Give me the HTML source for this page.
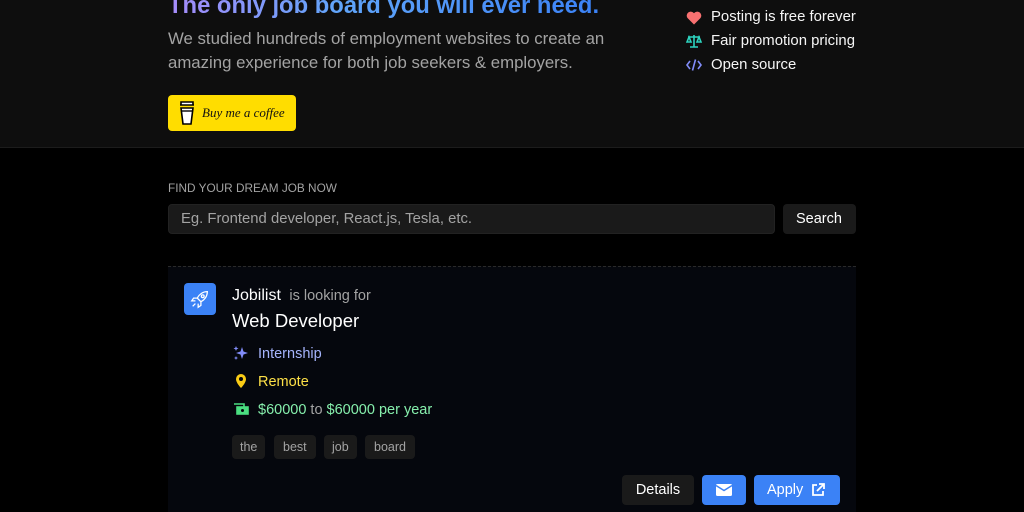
<!DOCTYPE html>
<html style="overflow:hidden;width:1024px;height:512px"><head><meta charset="utf-8"><style>
*{margin:0;padding:0;box-sizing:border-box}
body{width:1024px;height:512px;overflow:hidden;background:#000;font-family:"Liberation Sans",sans-serif;position:relative}
.a{position:absolute;white-space:nowrap}
</style></head><body>
<div class="a" style="left:0;top:0;width:1024px;height:148px;background:#0e0e0e;border-bottom:1px solid #1c1c1c"></div>
<div class="a" style="left:168px;top:-8px;font-size:23.8px;font-weight:bold;background:linear-gradient(90deg,#a78bfa,#60a5fa 40%,#3b82f6);-webkit-background-clip:text;color:transparent">The only job board you will ever need.</div>
<div class="a" style="left:168px;top:27px;font-size:16.8px;line-height:24px;color:#a3a3a3">We studied hundreds of employment websites to create an<br>amazing experience for both job seekers &amp; employers.</div>
<div class="a" style="left:168px;top:95px;width:128px;height:36px;background:#ffdd00;border-radius:4px"></div>
<svg class="a" style="left:178px;top:100px" width="18" height="26" viewBox="0 0 18 26"><path d="M2 5h14M3 2h12v3H3zM3 8h12l-2 16H5z" fill="#fff" stroke="#000" stroke-width="1.6"/><path d="M4 11h10" stroke="#000" stroke-width="1.4"/></svg>
<div class="a" style="left:202px;top:105px;font-size:13px;font-style:italic;font-family:'Liberation Serif',serif;color:#111">Buy me a coffee</div>
<svg class="a" style="left:686px;top:11px" width="16" height="14" viewBox="0 0 16 14"><path d="M8 13.5 1.5 7A3.6 3.6 0 0 1 8 2.3 3.6 3.6 0 0 1 14.5 7z" fill="#f87171"/></svg>
<div class="a" style="left:711px;top:9px;font-size:14.9px;color:#f5f5f5">Posting is free forever</div>
<svg class="a" style="left:686px;top:34px" width="16" height="14" viewBox="0 0 16 14" fill="none" stroke="#2dd4bf" stroke-width="1.6"><path d="M8 1v12M4 13h8M2 3h12M3 3 1 8h4zM13 3l-2 5h4z"/></svg>
<div class="a" style="left:711px;top:33px;font-size:14.9px;color:#f5f5f5">Fair promotion pricing</div>
<svg class="a" style="left:686px;top:58px" width="16" height="14" viewBox="0 0 16 14" fill="none" stroke="#818cf8" stroke-width="1.6"><path d="M4 3 1 7l3 4M12 3l3 4-3 4M9.5 1.5l-3 11"/></svg>
<div class="a" style="left:711px;top:57px;font-size:14.9px;color:#f5f5f5">Open source</div>
<div class="a" style="left:168px;top:181px;font-size:11.8px;color:#a3a3a3">FIND YOUR DREAM JOB NOW</div>
<div class="a" style="left:168px;top:204px;width:607px;height:30px;background:#1a1a1a;border:1px solid #222;border-radius:4px"></div>
<div class="a" style="left:181px;top:211px;font-size:14.85px;color:#a3a3a3">Eg. Frontend developer, React.js, Tesla, etc.</div>
<div class="a" style="left:783px;top:204px;width:73px;height:30px;background:#1a1a1a;border-radius:4px"></div>
<div class="a" style="left:796px;top:211px;font-size:14.5px;color:#fff">Search</div>
<div class="a" style="left:168px;top:266px;width:688px;height:246px;background:#05070d;border-top:1px dashed #2a2a2a"></div>
<div class="a" style="left:184px;top:283px;width:32px;height:32px;background:#3b82f6;border-radius:4px"></div>
<svg class="a" style="left:189px;top:288px" width="22" height="22" viewBox="0 0 24 24" fill="none" stroke="#fff" stroke-width="1.4"><path d="M20 4c-5 0-9 3-11 7l4 4c4-2 7-6 7-11zM9 11H5l-2 3 4 0M13 15v4l-3 2 0-4M7 17l-3 3"/><circle cx="15" cy="9" r="1.5"/></svg>
<div class="a" style="left:232px;top:287px;font-size:16px;color:#fff">Jobilist <span style="font-size:14.5px;color:#a3a3a3">&nbsp;is looking for</span></div>
<div class="a" style="left:232px;top:310px;font-size:18.5px;color:#fff">Web Developer</div>
<svg class="a" style="left:233px;top:345px" width="16" height="16" viewBox="0 0 16 16" fill="#818cf8"><path d="M9 2l1.5 4.5L15 8l-4.5 1.5L9 14l-1.5-4.5L3 8l4.5-1.5zM3 1l.7 1.8L5.5 3.5 3.7 4.2 3 6 2.3 4.2.5 3.5 2.3 2.8zM3 11l.6 1.4L5 13l-1.4.6L3 15l-.6-1.4L1 13l1.4-.6z"/></svg>
<div class="a" style="left:258px;top:346px;font-size:14.5px;color:#a5b4fc">Internship</div>
<svg class="a" style="left:233px;top:373px" width="16" height="16" viewBox="0 0 16 16"><path d="M8 1a5 5 0 0 0-5 5c0 4 5 9 5 9s5-5 5-9a5 5 0 0 0-5-5z" fill="#facc15"/><circle cx="8" cy="6" r="2" fill="#05070d"/></svg>
<div class="a" style="left:258px;top:374px;font-size:14.5px;color:#fde047">Remote</div>
<svg class="a" style="left:233px;top:402px" width="16" height="14" viewBox="0 0 16 14" fill="none" stroke="#4ade80" stroke-width="1.6"><path d="M1 2h10v6"/><rect x="4" y="5" width="11" height="7" fill="#4ade80"/><circle cx="9.5" cy="8.5" r="1.5" fill="#05070d" stroke="none"/></svg>
<div class="a" style="left:258px;top:402px;font-size:14.5px;color:#86efac">$60000 <span style="color:#a3a3a3">to</span> $60000 per year</div>
<div class="a" style="left:232px;top:435px;height:24px;padding:0 8px;background:#1a1a1a;border-radius:4px;font-size:12.5px;line-height:24px;color:#a3a3a3">the</div>
<div class="a" style="left:274px;top:435px;height:24px;padding:0 9px;background:#1a1a1a;border-radius:4px;font-size:12.5px;line-height:24px;color:#a3a3a3">best</div>
<div class="a" style="left:324px;top:435px;height:24px;padding:0 8px;background:#1a1a1a;border-radius:4px;font-size:12.5px;line-height:24px;color:#a3a3a3">job</div>
<div class="a" style="left:365px;top:435px;height:24px;padding:0 9px;background:#1a1a1a;border-radius:4px;font-size:12.5px;line-height:24px;color:#a3a3a3">board</div>
<div class="a" style="left:622px;top:475px;width:72px;height:30px;background:#1a1a1a;border-radius:4px;font-size:14.5px;line-height:31px;text-align:center;color:#fff">Details</div>
<div class="a" style="left:702px;top:475px;width:44px;height:30px;background:#3b82f6;border-radius:4px"></div>
<svg class="a" style="left:716px;top:484px" width="16" height="12" viewBox="0 0 16 12"><rect width="16" height="12" rx="1.5" fill="#fff"/><path d="M0 1.5 8 6.5 16 1.5" stroke="#3b82f6" stroke-width="1.4" fill="none"/></svg>
<div class="a" style="left:754px;top:475px;width:86px;height:30px;background:#3b82f6;border-radius:4px"></div>
<div class="a" style="left:767px;top:482px;font-size:14.5px;color:#fff">Apply</div>
<svg class="a" style="left:811px;top:483px" width="14" height="14" viewBox="0 0 14 14" fill="none" stroke="#fff" stroke-width="1.8"><path d="M6 2H2v10h10V8M8 1h5v5M13 1 6 8"/></svg>
</body></html>
